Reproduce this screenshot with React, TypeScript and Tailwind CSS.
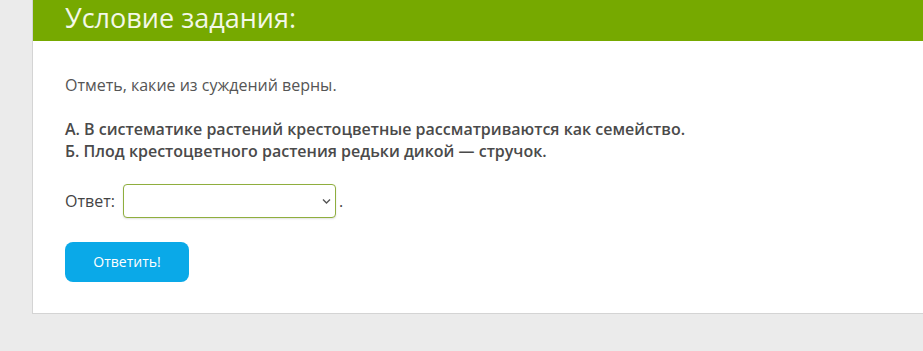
import React from "react";

const App = () => {
  return (
    <div className="w-full h-[351px] bg-[#ebebeb] pl-[32px] overflow-hidden font-['Open_Sans',sans-serif]">
      <div className="h-[314px] bg-white border-l border-b border-[#d4d4d4]">
        <div className="h-[41px] bg-[#76a900] pl-[32px] overflow-hidden">
          <h1 className="text-[27px] leading-[36px] text-[#f3f8e8]">Условие задания:</h1>
        </div>
        <div className="pl-[32px] pt-[33px] text-[16px] leading-[22px]">
          <p className="text-[#555]">Отметь, какие из суждений верны.</p>
          <p className="mt-[22px] font-semibold text-[#4a4a4a]">
            А. В систематике растений крестоцветные рассматриваются как семейство.
            <br />
            Б. Плод крестоцветного растения редьки дикой — стручок.
          </p>
          <div className="mt-[22px] flex items-center text-[#444]">
            <span className="font-medium">Ответ:</span>
            <div className="relative ml-[8px]">
              <select className="appearance-none block w-[213px] h-[34px] rounded-[4px] border border-[#8fae3e] bg-white shadow-[0_1px_2px_rgba(0,0,0,0.12)] outline-none" />
              <svg
                className="absolute right-[5px] top-[14px] pointer-events-none"
                width="9"
                height="7"
                viewBox="0 0 9 7"
                fill="none"
              >
                <path d="M1 1.5l3.5 3.5L8 1.5" stroke="#555" strokeWidth="1.4" />
              </svg>
            </div>
            <span className="ml-[3px]">.</span>
          </div>
          <button className="mt-[24px] w-[124px] h-[40px] rounded-[8px] bg-[#0aa9e8] text-white text-[14px]">
            Ответить!
          </button>
        </div>
      </div>
    </div>
  );
};

export default App;
